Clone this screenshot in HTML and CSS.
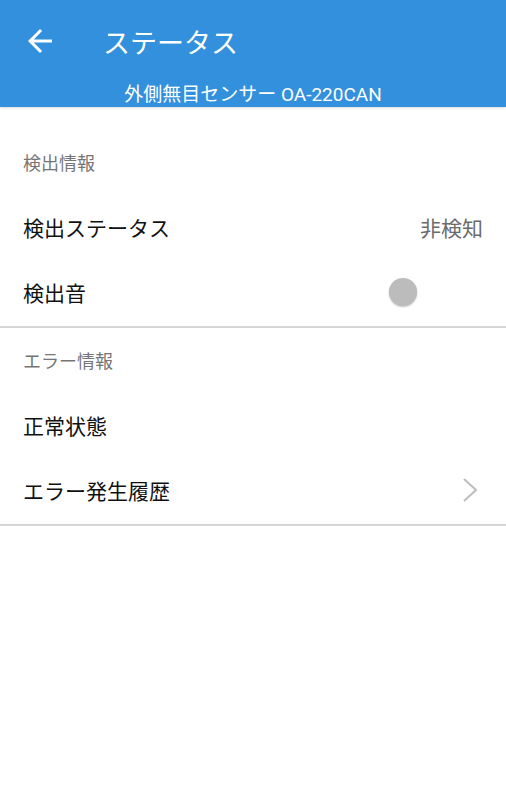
FILE: index.html
```html
<!DOCTYPE html>
<html lang="ja">
<head>
  <meta charset="UTF-8" />
  <meta name="viewport" content="width=device-width, initial-scale=1.0"/>
  <title>ステータス</title>
  <link rel="stylesheet" href="styles.css">
</head>
<body>
  <header class="appbar">
    <div class="toolbar">
      <button class="back" aria-label="戻る">
        <svg viewBox="0 0 24 24" width="36" height="36"><path d="M20 11H7.83l5.59-5.59L12 4l-8 8 8 8 1.41-1.41L7.83 13H20v-2z" fill="#fff"/></svg>
      </button>
      <h1 class="title">ステータス</h1>
    </div>
    <div class="subtitle">外側無目センサー OA-220CAN</div>
  </header>

  <section class="group first">
    <div class="group-label">検出情報</div>
    <div class="row">
      <span class="row-title">検出ステータス</span>
      <span class="row-value">非検知</span>
    </div>
    <div class="row">
      <span class="row-title">検出音</span>
      <span class="switch"><span class="knob"></span></span>
    </div>
  </section>

  <section class="group">
    <div class="group-label">エラー情報</div>
    <div class="row">
      <span class="row-title">正常状態</span>
    </div>
    <div class="row">
      <span class="row-title">エラー発生履歴</span>
      <svg class="chevron" viewBox="0 0 16 26" width="16" height="26"><polyline points="2,2 14,13 2,24" fill="none" stroke="#bdbdbd" stroke-width="2"/></svg>
    </div>
  </section>
</body>
</html>
```

FILE: styles.css
```css
* {
  box-sizing: border-box;
}
body {
  margin: 0;
  font-family: Roboto, "Noto Sans CJK JP", sans-serif;
  background: #fff;
  color: #111;
}
.appbar {
  background: #3290dc;
  color: #fff;
  height: 107px;
  box-shadow: 0 1px 2px rgba(0,0,0,0.15);
}
.toolbar {
  display: flex;
  align-items: center;
  height: 82px;
}
.back {
  background: none;
  border: none;
  padding: 0;
  margin-left: 22px;
  width: 36px;
  height: 36px;
  display: flex;
}
.title {
  margin: 0 0 0 45px;
  font-size: 27px;
  font-weight: normal;
}
.subtitle {
  height: 25px;
  line-height: 25px;
  text-align: center;
  font-size: 19px;
}
.group {
  padding-top: 10px;
  border-bottom: 2px solid #d6d6d6;
}
.group.first {
  padding-top: 33px;
}
.group-label {
  height: 48px;
  line-height: 48px;
  padding: 0 23px;
  margin-bottom: 8px;
  font-size: 18px;
  color: #757575;
}
.row {
  display: flex;
  align-items: center;
  justify-content: space-between;
  height: 65px;
  padding: 0 23px 3px;
}
.row-title {
  font-size: 21px;
}
.row-value {
  font-size: 21px;
  color: #6b6b6b;
}
.switch {
  display: flex;
  width: 28px;
  height: 28px;
  margin-right: 66px;
}
.knob {
  width: 28px;
  height: 28px;
  border-radius: 50%;
  background: #bcbcbc;
  box-shadow: 0 1px 2px rgba(0,0,0,0.25);
}
.chevron {
  margin-right: 5px;
}
```
